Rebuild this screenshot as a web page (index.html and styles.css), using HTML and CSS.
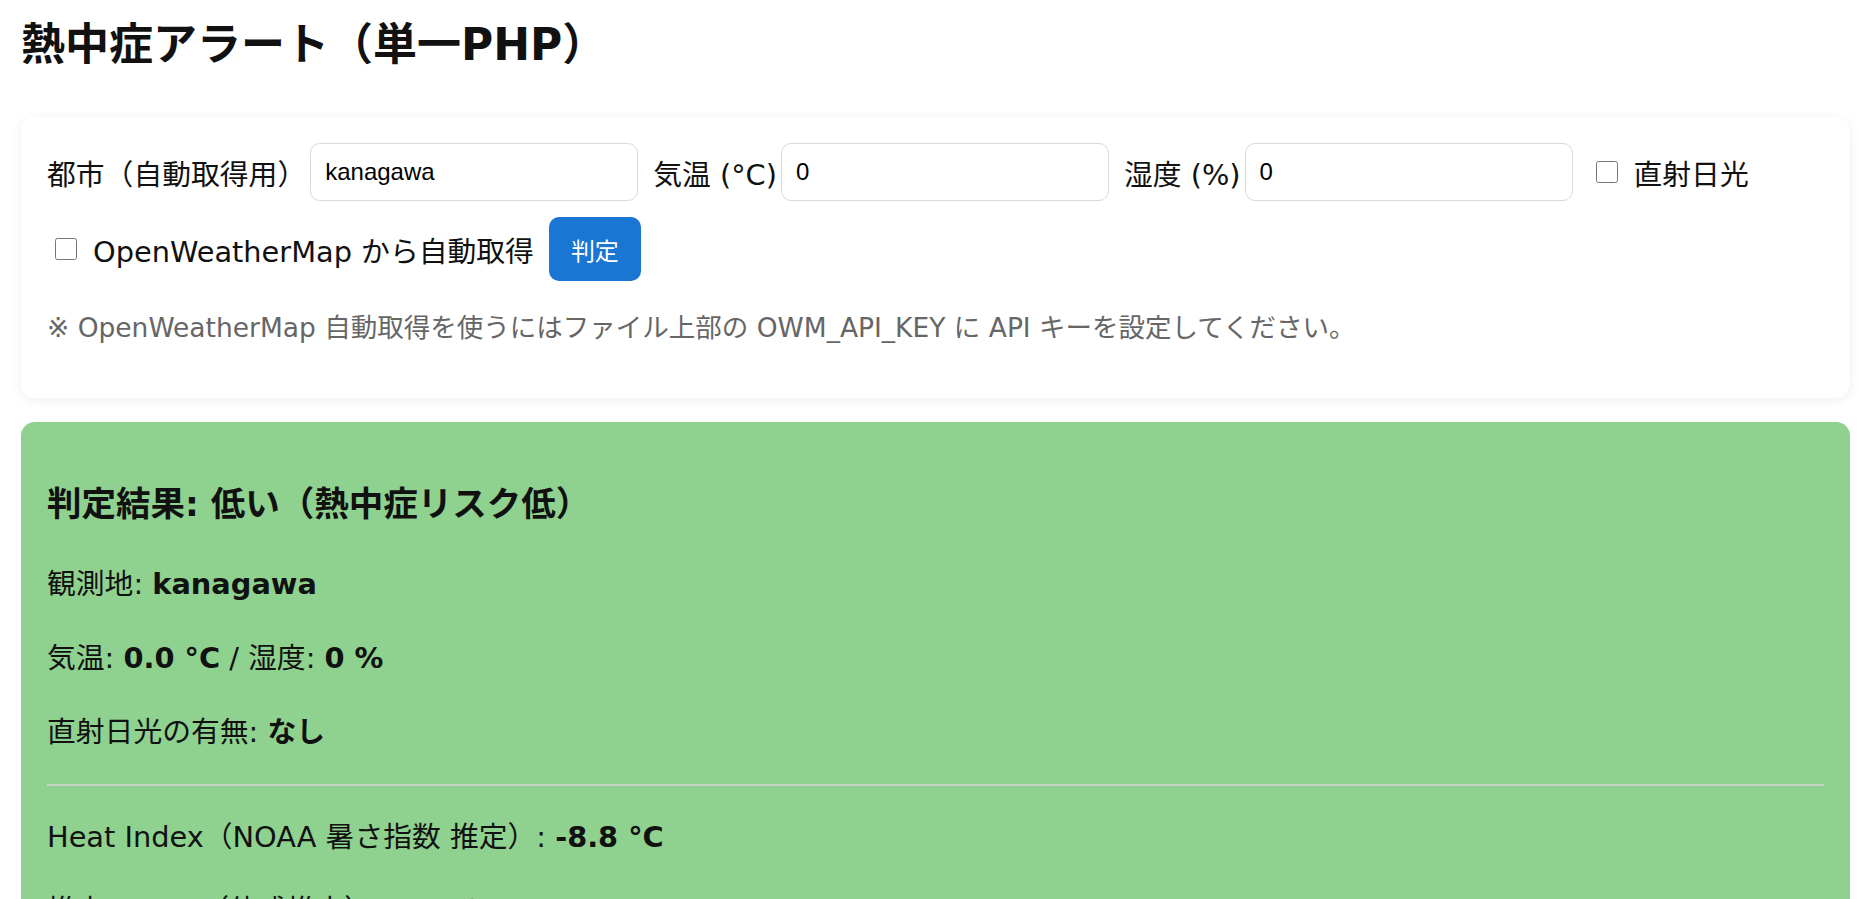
FILE: index.html
```html
<!DOCTYPE html>
<html lang="ja">
<head>
    <meta charset="UTF-8">
    <meta name="viewport" content="width=device-width, initial-scale=1.0">
    <title>熱中症アラート（単一PHP）</title>
    <link rel="stylesheet" href="styles.css">
</head>
<body>
    <h1>熱中症アラート（単一PHP）</h1>

    <form class="card" method="post">
        <div class="form-row">
            <label class="field">都市（自動取得用）<input type="text" name="city" value="kanagawa"></label>
            <label class="field">気温 (°C)<input type="number" name="temp" value="0"></label>
            <label class="field">湿度 (%)<input type="number" name="humidity" value="0"></label>
            <label class="check"><input type="checkbox" name="sun"> 直射日光</label>
            <label class="check"><input type="checkbox" name="auto"> OpenWeatherMap から自動取得</label>
            <button type="submit" class="btn">判定</button>
        </div>
        <p class="note">※ OpenWeatherMap 自動取得を使うにはファイル上部の OWM_API_KEY に API キーを設定してください。</p>
    </form>

    <div class="result low">
        <h3>判定結果: 低い（熱中症リスク低）</h3>
        <p>観測地: <b>kanagawa</b></p>
        <p>気温: <b>0.0 °C</b> / 湿度: <b>0 %</b></p>
        <p>直射日光の有無: <b>なし</b></p>
        <hr>
        <p>Heat Index（NOAA 暑さ指数 推定）: <b>-8.8 °C</b></p>
        <p class="sub">推定 WBGT（体感推定）: <b>-5.3 °C</b></p>
        <p class="sub">アドバイス: 通常の活動で問題ありません。こまめな水分補給を心がけてください。</p>
    </div>
</body>
</html>
```

FILE: styles.css
```css
body {
    font-family: "DejaVu Sans", "Noto Sans CJK JP", sans-serif;
    font-size: 28.8px;
    color: #111;
    background-color: #fff;
    margin: 0;
    padding: 13px 9px 0 21px;
}
h1 {
    font-size: 44px;
    line-height: 64px;
    margin: 0 0 40px;
}
.card {
    background-color: #fff;
    border-radius: 14px;
    box-shadow: 0 2px 12px rgba(0,0,0,0.07);
    padding: 26px 26px 1px;
    margin-bottom: 24px;
}
.form-row {
    display: flex;
    flex-wrap: wrap;
    align-items: center;
    gap: 16px 15px;
}
.field {
    display: flex;
    align-items: center;
    gap: 4px;
}
.field input {
    box-sizing: border-box;
    width: 328px;
    height: 58px;
    padding: 0 14px;
    font-family: "Liberation Sans", Arial, sans-serif;
    font-size: 24px;
    color: #000;
    border: 1px solid #dadada;
    border-radius: 10px;
    background: #fff;
    outline: none;
}
.check {
    display: flex;
    align-items: center;
    gap: 16px;
}
.check input {
    width: 22px;
    height: 22px;
    margin: 0 0 0 8px;
}
.btn {
    height: 64px;
    padding: 0 22px;
    font-family: "Noto Sans CJK JP", sans-serif;
    font-size: 24px;
    color: #fff;
    background-color: #1976d2;
    border: none;
    border-radius: 10px;
    cursor: pointer;
}
.note {
    font-size: 26.5px;
    line-height: 39px;
    color: #666;
    margin: 27px 0 50px;
}
.result {
    border-radius: 14px;
    padding: 23px 26px 10px;
}
.result.low {
    background-color: #8fd18f;
}
.result h3 {
    font-size: 34.5px;
    line-height: 50px;
    margin: 33.7px 0;
}
.result p {
    line-height: 45px;
    margin: 28.8px 0;
}
.result p.sub {
    margin-top: 14px;
}
.result hr {
    border: none;
    border-top: 2px solid #c6d6c6;
    margin: 0;
}
```
